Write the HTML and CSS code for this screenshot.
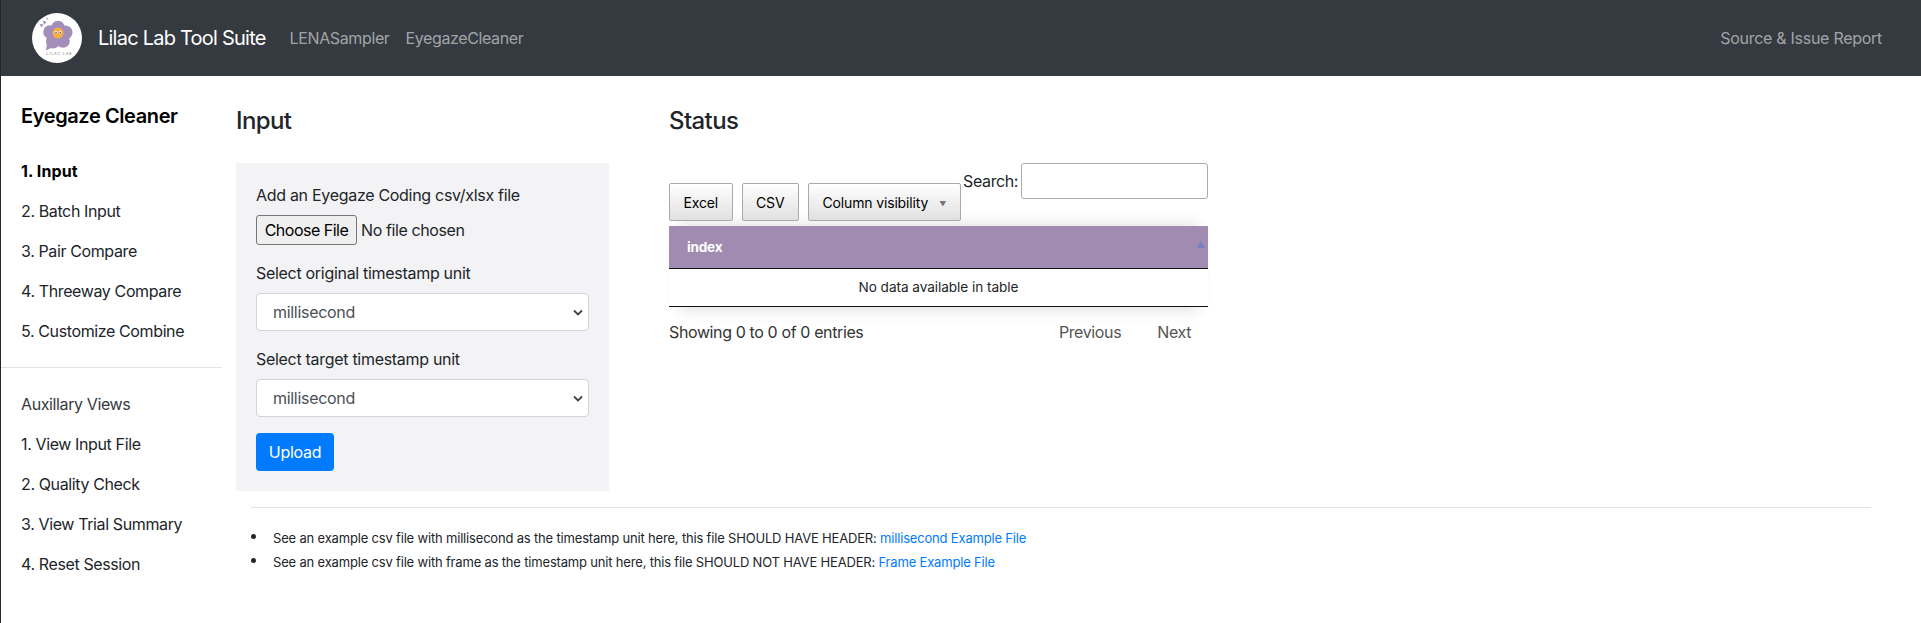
FILE: index.html
```html
<!DOCTYPE html>
<html lang="en">
<head>
<meta charset="utf-8">
<title>Eyegaze Cleaner</title>
<link rel="stylesheet" href="styles.css">
</head>
<body>
<nav class="navbar">
  <svg class="logo" viewBox="0 0 50 50" aria-hidden="true">
    <circle cx="25" cy="25" r="25" fill="#fff"/>
    <path d="M11 7.500l3.500 1.500-2.500 2.500z M7.500 11l4 .6-2 2.600z M14.500 4.500l1.800 .8-1.500 1.600z" fill="#9f86b8"/>
    <g fill="#a38db9">
      <circle cx="26" cy="14.500" r="6.800"/>
      <circle cx="33.500" cy="19.500" r="7"/>
      <circle cx="31" cy="28" r="6.800"/>
      <circle cx="21" cy="28.500" r="7"/>
      <circle cx="18" cy="19" r="6.800"/>
      <circle cx="26" cy="22" r="8"/>
      <path d="M15 30l-1 7.500 7-3.500z"/>
    </g>
    <circle cx="26" cy="20" r="5.500" fill="#f3ae45"/>
    <circle cx="24" cy="19.500" r="1.400" fill="#fff"/>
    <circle cx="28.200" cy="19.500" r="1.400" fill="#fff"/>
    <circle cx="24" cy="19.800" r=".8" fill="#4a3a30"/>
    <circle cx="28.200" cy="19.800" r=".8" fill="#4a3a30"/>
    <text x="27.500" y="41.500" class="logo-text" text-anchor="middle">LILAC LAB</text>
  </svg>
  <a class="brand" href="#">Lilac Lab Tool Suite</a>
  <a class="nav-link" href="#">LENASampler</a>
  <a class="nav-link" href="#">EyegazeCleaner</a>
  <a class="nav-link nav-right" href="#">Source &amp; Issue Report</a>
</nav>

<div class="layout">
  <aside class="sidebar">
    <h1 class="side-title">Eyegaze Cleaner</h1>
    <ul class="side-list">
      <li class="active">1. Input</li>
      <li>2. Batch Input</li>
      <li>3. Pair Compare</li>
      <li>4. Threeway Compare</li>
      <li>5. Customize Combine</li>
    </ul>
    <hr class="side-rule">
    <ul class="side-list">
      <li class="muted">Auxillary Views</li>
      <li>1. View Input File</li>
      <li>2. Quality Check</li>
      <li>3. View Trial Summary</li>
      <li>4. Reset Session</li>
    </ul>
  </aside>

  <main class="main">
    <div class="columns">
      <section class="input-col">
        <h2 class="heading">Input</h2>
        <form class="panel">
          <label class="field-label">Add an Eyegaze Coding csv/xlsx file</label>
          <input class="file" type="file">
          <label class="field-label second">Select original timestamp unit</label>
          <select class="select"><option>millisecond</option></select>
          <label class="field-label third">Select target timestamp unit</label>
          <select class="select"><option>millisecond</option></select>
          <button class="upload" type="button">Upload</button>
        </form>
      </section>

      <section class="status-col">
        <h2 class="heading">Status</h2>
        <div class="toolbar">
          <div class="buttons">
            <button class="dt-btn" type="button">Excel</button>
            <button class="dt-btn" type="button">CSV</button>
            <button class="dt-btn caret" type="button">Column visibility</button>
          </div>
          <label class="search">Search:<input type="search" class="search-input"></label>
        </div>
        <table class="table">
          <thead><tr><th>index</th></tr></thead>
          <tbody><tr><td>No data available in table</td></tr></tbody>
        </table>
        <div class="dt-foot">
          <span>Showing 0 to 0 of 0 entries</span>
          <span class="pager"><a>Previous</a><a>Next</a></span>
        </div>
      </section>
    </div>

    <hr class="main-rule">
    <ul class="notes">
      <li>See an example csv file with millisecond as the timestamp unit here, this file SHOULD HAVE HEADER: <a href="#">millisecond Example File</a></li>
      <li>See an example csv file with frame as the timestamp unit here, this file SHOULD NOT HAVE HEADER: <a href="#">Frame Example File</a></li>
    </ul>
  </main>
</div>
</body>
</html>
```
FILE: styles.css
```css
* { box-sizing: border-box; }
html, body { height: 100%; }
body {
  margin: 0;
  border-left: 1px solid #23272b;
  background: #fff;
  color: #212529;
  font-family: Inter, "Liberation Sans", sans-serif;
  font-size: 16px;
  line-height: 24px;
  overflow: hidden;
}
a { text-decoration: none; }

.navbar {
  display: flex;
  align-items: center;
  height: 76px;
  padding: 0 39px 0 31px;
  background: #343a40;
}
.logo { width: 50px; height: 50px; flex: none; }
.logo-text { font-size: 3.200px; letter-spacing: 1.100px; fill: #666; font-family: Inter, sans-serif; }
.brand { margin: 0 24px 0 16px; color: #fff; font-size: 20px; letter-spacing: -.77px; }
.nav-link { margin-right: 16px; color: rgba(255,255,255,.55); font-size: 16px; letter-spacing: -.38px; }
.nav-right { margin: 0 0 0 auto; letter-spacing: -.28px; }

.layout { display: flex; }
.sidebar { flex: none; width: 221px; padding-top: 28px; }
.side-title { margin: 0 0 23px 20px; color: #000; font-size: 20px; line-height: 24px; font-weight: 600; letter-spacing: -.4px; }
.side-list { margin: 0; padding: 0 0 0 20px; list-style: none; }
.side-list li { height: 40px; line-height: 40px; letter-spacing: -.38px; color: #212529; }
.side-list .active { font-weight: 700; color: #000; letter-spacing: .1px; }
.side-list .muted { color: #343a40; }
.side-rule { margin: 16px 0 16px; border: 0; border-top: 1px solid #e3e3e3; }

.main { flex: 1; min-width: 0; padding: 0 50px 0 14px; }
.columns { display: flex; gap: 60px; }
.input-col { width: 373px; flex: none; }
.status-col { width: 539px; flex: none; }
.heading { margin: 30px 0 27px; height: 30px; font-size: 24px; line-height: 30px; font-weight: 500; letter-spacing: -.6px; color: #212529; }

.panel { display: block; height: 328px; padding: 20px; background: #f3f3f5; }
.field-label { display: block; letter-spacing: -.3px; }
.field-label.second { margin-top: 16px; }
.field-label.third { margin-top: 16px; }
.file { display: block; margin-top: 8px; height: 30px; font: inherit; letter-spacing: -.4px; color: #212529; }
.file::file-selector-button {
  height: 30px; width: 101px; margin-right: 4px; padding: 0;
  font: inherit; letter-spacing: -.5px; color: #000;
  background: #efefef; border: 1px solid #767676; border-radius: 3px;
}
.select {
  display: block; width: 333px; height: 38px; margin-top: 8px; padding: 0 12px 0 16px;
  font: inherit; letter-spacing: -.3px; color: #495057;
  background: #fff url("data:image/svg+xml,%3Csvg xmlns='http://www.w3.org/2000/svg' width='10' height='7'%3E%3Cpath d='M1 1.500l4 4 4-4' fill='none' stroke='%23444' stroke-width='1.800'/%3E%3C/svg%3E") no-repeat right 5px center;
  border: 1px solid #ced4da; border-radius: 4px;
  appearance: none;
}
.upload {
  display: block; width: 78px; height: 38px; margin-top: 16px; padding: 0;
  font: inherit; letter-spacing: -.3px; color: #fff;
  background: #007bff; border: 0; border-radius: 4px;
}

.toolbar { display: flex; align-items: flex-start; height: 63px; position: relative; z-index: 1; }
.buttons { display: flex; flex: none; gap: 9px; margin-top: 20px; }
.dt-btn {
  flex: none; height: 38px; padding: 0 13.500px; white-space: nowrap;
  font-family: inherit; font-size: 14px; letter-spacing: -.15px; color: #000;
  background: linear-gradient(#fff, #e0e0e0); border: 1px solid #a9a9a9; border-radius: 2px;
}
.dt-btn.caret::after { content: "▼"; margin-left: 11px; font-size: 7px; color: #777; vertical-align: 1px; }
.search { display: flex; gap: 3px; letter-spacing: -.4px; padding-top: 6px; flex: 1; justify-content: flex-end; }
.search-input {
  width: 187px; height: 36px; margin-top: -6px; background: #fff;
  border: 1px solid #aaa; border-radius: 3px; appearance: none;
}
.table {
  width: 100%; border-collapse: collapse; font-size: 13.600px;
  box-shadow: 0 -12px 14px -10px rgba(0,0,0,.12), 0 12px 14px -10px rgba(0,0,0,.14);
}
.table th {
  height: 42px; padding: 0 18px; text-align: left; color: #fff; font-weight: 700; letter-spacing: -.2px;
  background: #a18bb1; border-bottom: 1px solid #111; position: relative;
}
.table th::after { content: ""; position: absolute; right: 3px; top: 15px; border: 4px solid transparent; border-top: 0; border-bottom: 7px solid #7d7fc4; }
.table td { height: 38px; padding: 0; text-align: center; letter-spacing: -.05px; border-bottom: 1px solid #111; }
.dt-foot { display: flex; justify-content: space-between; align-items: center; margin-top: 13px; letter-spacing: -.38px; color: #333; }
.pager { display: flex; gap: 36px; padding-right: 17px; color: #555; }

.main-rule { margin: 16px 0 0 15px; border: 0; border-top: 1px solid #e3e3e3; }
.notes { margin: 18px 0 0 15px; padding: 0 0 0 22px; list-style: none; font-size: 13px; letter-spacing: -.18px; color: #212529; }
.notes li { position: relative; height: 24px; line-height: 24px; }
.notes li::before { content: ""; position: absolute; left: -22px; top: 8px; width: 5px; height: 5px; border-radius: 50%; background: #212529; }
.notes a { color: #007bff; }
```
